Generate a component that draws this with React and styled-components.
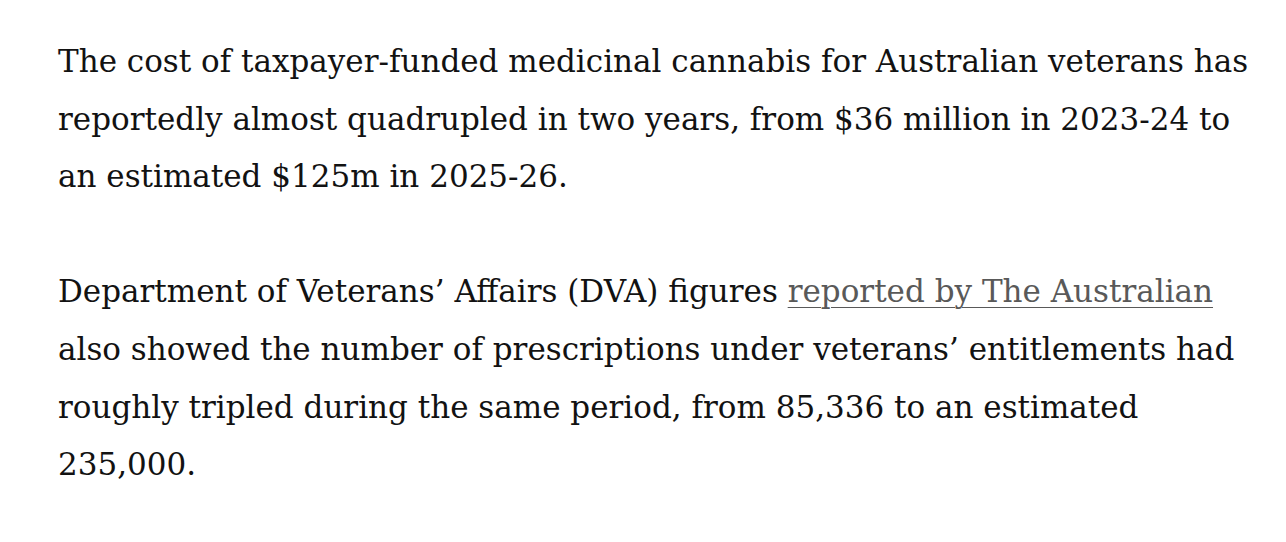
import React from "react";
import styled, { createGlobalStyle } from "styled-components";

const GlobalStyle = createGlobalStyle`
  html, body { margin: 0; padding: 0; background: #ffffff; }
`;

const Article = styled.article`
  box-sizing: border-box;
  width: 1286px;
  padding: 33px 28px 0 58px;
  font-family: "DejaVu Serif", "Liberation Serif", serif;
  font-size: 31px;
  line-height: 57.6px;
  color: #121212;
`;

const Paragraph = styled.p`
  margin: 0 0 57.6px;
`;

const Link = styled.a`
  color: #595959;
  text-decoration: underline;
  text-decoration-thickness: 1px;
  text-underline-offset: 5px;
  text-decoration-color: #595959;
`;

export default function App() {
  return (
    <>
      <GlobalStyle />
      <Article>
        <Paragraph>
          The cost of taxpayer-funded medicinal cannabis for Australian veterans has
          reportedly almost quadrupled in two years, from $36 million in 2023-24 to
          an estimated $125m in 2025-26.
        </Paragraph>
        <Paragraph>
          Department of Veterans’ Affairs (DVA) figures{" "}
          <Link href="#">reported by The Australian</Link> also showed the number of
          prescriptions under veterans’ entitlements had roughly tripled during the
          same period, from 85,336 to an estimated 235,000.
        </Paragraph>
      </Article>
    </>
  );
}
